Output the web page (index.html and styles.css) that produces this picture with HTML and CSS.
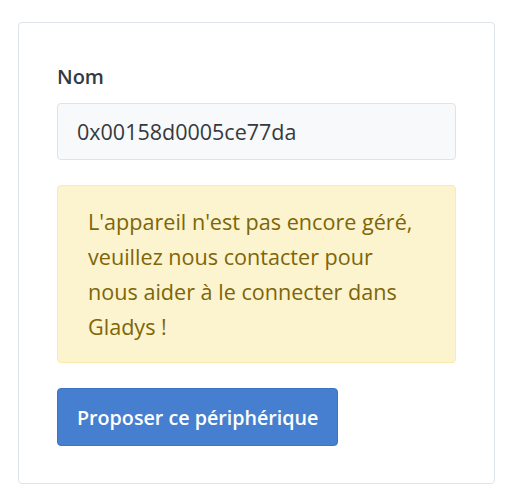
FILE: index.html
```html
<!DOCTYPE html>
<html lang="fr">
<head>
<meta charset="utf-8">
<link rel="stylesheet" href="styles.css">
</head>
<body>
<div class="page">
  <div class="card">
    <div class="card-body">
      <div class="form-group">
        <label class="form-label">Nom</label>
        <input class="form-control" type="text" value="0x00158d0005ce77da" readonly>
      </div>
      <div class="alert alert-warning">L'appareil n'est pas encore géré,<br>veuillez nous contacter pour<br>nous aider à le connecter dans<br>Gladys !</div>
      <button class="btn btn-primary">Proposer ce périphérique</button>
    </div>
  </div>
</div>
</body>
</html>
```

FILE: styles.css
```css
* { box-sizing: border-box; }
html, body { margin: 0; padding: 0; background: #ffffff; }
body {
  font-family: "Open Sans", "Noto Sans", sans-serif;
  color: #495057;
}
.page {
  padding: 22px 21px 16px 18px;
}
.card {
  width: 477px;
  border: 1px solid #dfe3ea;
  border-radius: 4px;
  background: #fff;
}
.card-body {
  padding: 39px 38px 37px 38px;
  display: flex;
  flex-direction: column;
  align-items: flex-start;
}
.form-group {
  width: 100%;
  display: flex;
  flex-direction: column;
}
.form-label {
  font-size: 20px;
  font-weight: 600;
  color: #343a40;
  line-height: 30px;
  margin-bottom: 11px;
}
.form-control {
  width: 100%;
  height: 57px;
  padding: 0 19px;
  font-family: inherit;
  font-size: 21.5px;
  color: #343a40;
  background: #f8f9fa;
  border: 1px solid #dfe3ea;
  border-radius: 4px;
  outline: none;
}
.alert {
  width: 100%;
  margin-top: 25px;
  padding: 18px 30px 18px 30px;
  background: #fcf3cf;
  border: 1px solid #fbeaa9;
  border-radius: 4px;
  color: #7d6608;
  font-size: 21.6px;
  line-height: 35px;
}
.btn {
  margin-top: 25px;
  height: 58px;
  padding: 0 19px;
  font-family: inherit;
  font-size: 19.7px;
  font-weight: 600;
  color: #fff;
  background: #467fcf;
  border: 1px solid #3f74c0;
  border-radius: 4px;
}
```
